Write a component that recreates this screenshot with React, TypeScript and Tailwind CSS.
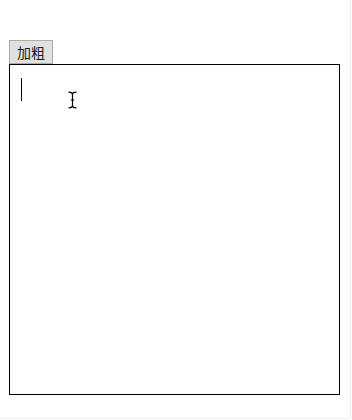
export default function App() {
  return (
    <div
      className="h-[419px] w-[351px] border-b border-r border-[#f0f0f0] bg-white pl-[9px] pt-[40px]"
      style={{ fontFamily: '"Noto Sans CJK SC", "Liberation Sans", sans-serif' }}
    >
      <button
        type="button"
        className="flex h-[24px] w-[44px] items-center justify-center border border-[#adadad] bg-[#e1e1e1] text-[14px] leading-none text-[#1a1a1a]"
      >
        加粗
      </button>
      <div className="relative h-[331px] w-[331px] border border-black bg-white">
        {/* text caret */}
        <div className="absolute left-[11px] top-[13px] h-[23px] w-px bg-black" />
        {/* mouse I-beam cursor */}
        <svg
          className="absolute left-[58px] top-[26px]"
          width="9"
          height="18"
          viewBox="0 0 9 18"
          fill="none"
          stroke="#000"
          strokeWidth="1.2"
          strokeLinecap="round"
        >
          <path d="M1 1.2c2 0 3.5 0.3 3.5 2.3c0-2 1.5-2.3 3.5-2.3M4.5 3.5v11M1 16.8c2 0 3.5-0.3 3.5-2.3c0 2 1.5 2.3 3.5 2.3M3.2 9h2.6" />
        </svg>
      </div>
    </div>
  );
}
